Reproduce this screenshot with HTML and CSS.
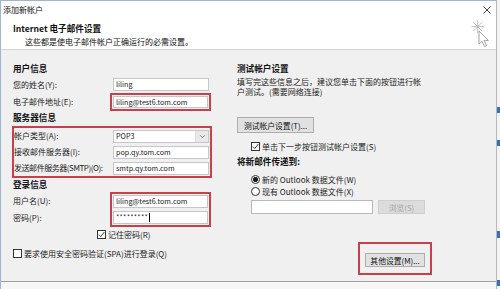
FILE: index.html
```html
<!DOCTYPE html>
<html lang="zh-CN">
<head>
<meta charset="utf-8">
<title>添加新帐户</title>
<link rel="stylesheet" href="styles.css">
</head>
<body>
<div class="screen">
  <div class="window">
    <div class="titlebar">
      <span class="title">添加新帐户</span>
      <svg class="close" width="8" height="8" viewBox="0 0 8 8"><path d="M0.5 0.5 L7.5 7.5 M7.5 0.5 L0.5 7.5" stroke="#333" stroke-width="0.9" fill="none"/></svg>
    </div>
    <div class="header">
      <div class="h-title">Internet 电子邮件设置</div>
      <div class="h-sub">这些都是使电子邮件帐户正确运行的必需设置。</div>
      <svg class="cursor" width="24" height="32" viewBox="0 0 24 32">
        <g stroke="#b4b4b4" stroke-width="0.9" fill="none">
          <path d="M7.7 2.5 V14.9 M1.5 8.7 H13.9 M3.3 4.3 L12.1 13.1 M12.1 4.3 L3.3 13.1"/>
        </g>
        <path d="M9 13 L9 26 L12 23.3 L14.6 28.6 L16.6 27.6 L14.1 22.4 L18.4 22.4 Z" fill="#fff" stroke="#8a8a8a" stroke-width="0.8" stroke-linejoin="round"/>
      </svg>
    </div>
    <div class="main">
      <div class="left">
        <div class="sec sec-first">用户信息</div>
        <div class="row r-name"><span class="lbl">您的姓名(Y):</span><div class="inp">liling</div></div>
        <div class="row r-email"><span class="lbl">电子邮件地址(E):</span><div class="hl"><div class="inp">liling@test6.tom.com</div></div></div>
        <div class="sec sec-mid">服务器信息</div>
        <div class="srv">
          <div class="row"><span class="lbl">帐户类型(A):</span><div class="inp sel"><span>POP3</span><span class="arrow"><svg width="7" height="5" viewBox="0 0 7 5"><path d="M1 1.2 L3.5 3.7 L6 1.2" stroke="#777" stroke-width="0.9" fill="none"/></svg></span></div></div>
          <div class="row"><span class="lbl">接收邮件服务器(I):</span><div class="inp">pop.qy.tom.com</div></div>
          <div class="row"><span class="lbl lbl-tight">发送邮件服务器(SMTP)(O):</span><div class="inp">smtp.qy.tom.com</div></div>
        </div>
        <div class="sec sec-mid">登录信息</div>
        <div class="login">
          <span class="lbl l-user">用户名(U):</span>
          <span class="lbl l-pass">密码(P):</span>
          <div class="hl hl-login">
            <div class="inp">liling@test6.tom.com</div>
            <div class="inp pw">*********<span class="caret"></span></div>
          </div>
        </div>
        <div class="chk remember"><span class="cb"><svg width="7" height="7" viewBox="0 0 7 7"><path d="M0.8 3.6 L2.7 5.6 L6.3 1" stroke="#222" stroke-width="0.9" fill="none"/></svg></span>记住密码(R)</div>
        <div class="chk spa"><span class="cb"></span>要求使用安全密码验证(SPA)进行登录(Q)</div>
      </div>
      <div class="right">
        <div class="sec sec-first">测试帐户设置</div>
        <p class="desc">填写完这些信息之后，建议您单击下面的按钮进行帐<br>户测试。(需要网络连接)</p>
        <div class="btn b-test">测试帐户设置(T)...</div>
        <div class="chk auto"><span class="cb"><svg width="7" height="7" viewBox="0 0 7 7"><path d="M0.8 3.6 L2.7 5.6 L6.3 1" stroke="#222" stroke-width="0.9" fill="none"/></svg></span>单击下一步按钮测试帐户设置(S)</div>
        <div class="sec sec-deliver">将新邮件传递到:</div>
        <div class="radio r-first"><span class="rb on"></span>新的 Outlook 数据文件(W)</div>
        <div class="radio"><span class="rb"></span>现有 Outlook 数据文件(X)</div>
        <div class="browse-row"><div class="inp wide"></div><div class="btn b-browse">浏览(S)</div></div>
        <div class="hl more"><div class="btn b-more">其他设置(M)...</div></div>
      </div>
    </div>
    <div class="footer"></div>
  </div>
  <div class="edge"></div>
</div>
</body>
</html>
```

FILE: styles.css
```css
* { box-sizing: border-box; margin: 0; padding: 0; }
html, body { width: 500px; height: 289px; overflow: hidden; }
body {
  font-family: "Noto Sans CJK SC", "Noto Sans", sans-serif;
  font-size: 8px;
  color: #1c1c1c;
  background: #fff;
}
.screen { display: flex; width: 500px; height: 289px; }
.window {
  flex: none;
  width: 497px;
  height: 289px;
  display: flex;
  flex-direction: column;
  border-left: 1px solid #9fb6cf;
  border-top: 1px solid #9fb6cf;
  border-right: 1px solid #b8b8b8;
  background: #fff;
}
.edge {
  flex: none;
  width: 3px;
  background: linear-gradient(to bottom,
    #f3f3f3 0, #f3f3f3 107px, #3b6fb0 107px, #3b6fb0 113px,
    #f3f3f3 113px, #f3f3f3 140px, #3b6fb0 140px, #3b6fb0 146px,
    #f3f3f3 146px, #f3f3f3 231px, #3b6fb0 231px, #3b6fb0 238px,
    #f3f3f3 238px, #f3f3f3 280px, #3b6fb0 280px, #3b6fb0 286px, #f3f3f3 286px);
}
.titlebar {
  height: 17px;
  flex: none;
  display: flex;
  align-items: center;
  justify-content: space-between;
  padding: 0 5px 0 2px;
  line-height: 17px;
  color: #111;
}
.close { display: block; }
.header {
  position: relative;
  flex: none;
  height: 32px;
  border-bottom: 1px solid #d6d6d6;
  padding: 3px 0 0 12px;
  color: #111;
}
.h-title { font-weight: bold; line-height: 14px; font-size: 8.6px; }
.h-sub { line-height: 12px; padding-left: 12px; margin-top: 1px; }
.cursor { position: absolute; left: 469px; top: 0; }

.main { flex: none; height: 231px; display: flex; background: #f0f0f0; }
.left { width: 218px; flex: none; padding: 10px 0 0 12px; }
.right { flex: 1; padding: 10px 0 0 18px; }
.footer { flex: none; height: 8px; border-top: 1px solid #a0a0a0; background: #f7f7f7; }

.sec { font-weight: bold; font-size: 8.6px; color: #111; }
.sec-first { height: 16px; line-height: 16px; }
.sec-mid { height: 13px; line-height: 13px; }

.row { display: grid; grid-template-columns: 100px 96px; align-items: center; }
.lbl { white-space: nowrap; line-height: 12px; }
.lbl-tight { letter-spacing: -0.45px; }
.r-name { height: 17px; }
.r-email { height: 18px; }

.inp {
  height: 13px;
  background: #fff;
  border: 1px solid #c6c6c6;
  font-size: 7.2px;
  line-height: 11px;
  padding-left: 2px;
  color: #222;
  white-space: nowrap;
  overflow: hidden;
}
.hl { border: 2px solid #c8414a; padding: 1px; }
.r-email .hl { margin: 0 -2px 0 -3px; }
.r-email .hl .inp { height: 12px; line-height: 10px; }

.srv { margin: 2px 0 0 -1px; width: 200px; border: 2px solid #c8414a; }
.srv .row { grid-template-columns: 99px 96px; height: 16px; }
.sel { display: flex; justify-content: space-between; padding-right: 0; }
.arrow {
  width: 13px;
  height: 11px;
  background: #e9e9e9;
  border-left: 1px solid #dedede;
  display: flex;
  align-items: center;
  justify-content: center;
}

.login {
  display: grid;
  grid-template-columns: 100px 96px;
  grid-template-rows: 17.5px 17.5px;
  margin-top: 1px;
}
.l-user { grid-column: 1; grid-row: 1; align-self: center; }
.l-pass { grid-column: 1; grid-row: 2; align-self: center; }
.hl-login {
  grid-column: 2;
  grid-row: 1 / 3;
  margin: 0 -2px 0 -3px;
  display: flex;
  flex-direction: column;
  gap: 3px;
}
.pw { display: flex; align-items: center; letter-spacing: 0.2px; }
.caret { display: inline-block; width: 1px; height: 9px; background: #000; margin-left: 1px; }

.chk { display: flex; align-items: center; gap: 2px; white-space: nowrap; }
.cb {
  flex: none;
  width: 9px;
  height: 9px;
  border: 1px solid #333;
  background: #fff;
  display: flex;
  align-items: center;
  justify-content: center;
}
.cb svg { display: block; }
.remember { height: 13px; margin-top: 1px; padding-left: 84px; }
.spa { height: 13px; margin-top: 6px; }

.desc { margin-top: 1px; line-height: 10px; color: #222; }
.btn {
  border: 1px solid #adadad;
  background: #e1e1e1;
  display: flex;
  align-items: center;
  justify-content: center;
  font-size: 7.8px;
  color: #111;
  white-space: nowrap;
}
.b-test { width: 77px; height: 16px; margin-top: 20px; }
.auto { height: 14px; margin-top: 6px; padding-left: 14px; }
.sec-deliver { height: 14px; line-height: 14px; margin-top: 1px; }
.radio { height: 12px; display: flex; align-items: center; gap: 2px; padding-left: 14px; white-space: nowrap; }
.r-first { margin-top: 5px; }
.rb {
  flex: none;
  width: 9px;
  height: 9px;
  border-radius: 50%;
  border: 1px solid #333;
  background: #fff;
}
.rb.on { background: radial-gradient(circle, #1e1e1e 0, #1e1e1e 2.2px, #fff 2.9px); }
.browse-row { display: flex; gap: 5px; margin-top: 3px; padding-left: 14px; height: 14px; }
.inp.wide { width: 122px; height: 14px; border-color: #b9b9b9; }
.b-browse { width: 47px; height: 14px; background: #dcdcdc; border-color: #cfcfcf; color: #a8a8a8; }
.more { margin: 28px 0 0 121px; width: 74px; padding: 9px 5px 6px; }
.b-more { height: 14px; }
```
